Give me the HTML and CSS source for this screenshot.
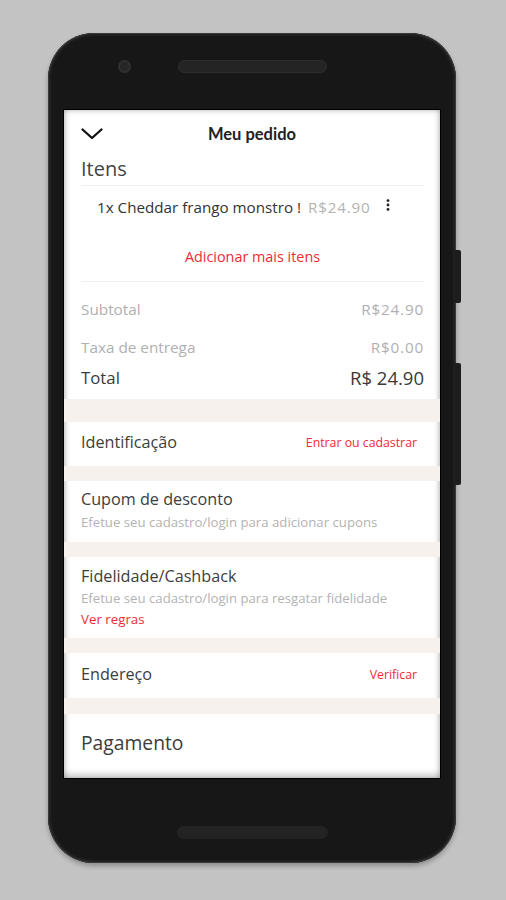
FILE: index.html
```html
<!DOCTYPE html>
<html lang="pt-BR">
<head>
<meta charset="utf-8">
<title>Meu pedido</title>
<link rel="stylesheet" href="styles.css">
</head>
<body>
<div class="phone">
  <div class="btn btn-a"></div>
  <div class="btn btn-b"></div>
  <div class="phone-top">
    <div class="camera"></div>
    <div class="speaker"></div>
  </div>
  <div class="screen">
    <div class="header">
      <svg class="chev" width="22" height="12" viewBox="0 0 22 12"><polyline points="1.5,1.5 11,10 20.5,1.5" fill="none" stroke="#111" stroke-width="2.3" stroke-linecap="round" stroke-linejoin="round"/></svg>
      <div class="title">Meu pedido</div>
    </div>
    <div class="pad">
      <div class="sec-title">Itens</div>
      <div class="item-row">
        <span class="item-name">1x Cheddar frango monstro !</span>
        <span class="item-price price">R$24.90</span>
        <svg class="kebab" width="4" height="12" viewBox="0 0 4 12"><circle cx="2" cy="1.6" r="1.4" fill="#222"/><circle cx="2" cy="6" r="1.4" fill="#222"/><circle cx="2" cy="10.4" r="1.4" fill="#222"/></svg>
      </div>
      <div class="add-row">Adicionar mais itens</div>
      <div class="summary">
        <div class="sum-row muted"><span>Subtotal</span><span class="price">R$24.90</span></div>
        <div class="sum-row muted gap-lg"><span>Taxa de entrega</span><span class="price">R$0.00</span></div>
        <div class="sum-row total"><span>Total</span><span class="total-val">R$ 24.90</span></div>
      </div>
    </div>
    <div class="band b23"></div>
    <div class="row-line h44 up3">
      <span class="label">Identificação</span>
      <span class="link">Entrar ou cadastrar</span>
    </div>
    <div class="band b15"></div>
    <div class="block cupom">
      <div class="label big">Cupom de desconto</div>
      <div class="sub">Efetue seu cadastro/login para adicionar cupons</div>
    </div>
    <div class="band b15"></div>
    <div class="block fid">
      <div class="label big">Fidelidade/Cashback</div>
      <div class="sub">Efetue seu cadastro/login para resgatar fidelidade</div>
      <div class="sub red">Ver regras</div>
    </div>
    <div class="band b15"></div>
    <div class="row-line h45 up2">
      <span class="label big">Endereço</span>
      <span class="link">Verificar</span>
    </div>
    <div class="band b16"></div>
    <div class="row-line h56">
      <span class="label pay">Pagamento</span>
    </div>
  </div>
  <div class="phone-bottom">
    <div class="home-bar"></div>
  </div>
</div>
</body>
</html>
```
FILE: styles.css
```css
* { box-sizing: border-box; }
html, body { margin: 0; padding: 0; }
body {
  background: #c3c3c3;
  width: 506px;
  height: 900px;
  overflow: hidden;
  font-family: "Open Sans", "Noto Sans", sans-serif;
}
.phone {
  position: relative;
  margin: 33px 0 0 48px;
  width: 408px;
  height: 830px;
  background: #171717;
  border-radius: 46px;
  box-shadow: inset 0 0 0 1px #3a3a3a, inset 0 0 0 3px #202020, 0 3px 5px rgba(0,0,0,0.28);
  display: flex;
  flex-direction: column;
}
.btn {
  position: absolute;
  right: -5px;
  width: 6px;
  background: #1d1d1d;
  border-radius: 0 2px 2px 0;
}
.btn-a { top: 217px; height: 53px; }
.btn-b { top: 330px; height: 122px; }
.phone-top {
  height: 77px;
  padding: 27px 0 0 70px;
  display: flex;
  align-items: flex-start;
  flex-shrink: 0;
}
.camera {
  width: 13px;
  height: 13px;
  border-radius: 50%;
  background: #262626;
  box-shadow: inset 0 0 0 2px #303030;
  margin-right: 47px;
}
.speaker {
  width: 149px;
  height: 13px;
  border-radius: 7px;
  background: #242424;
  box-shadow: inset 0 0 0 1px #2c2c2c;
}
.screen {
  margin: 0 16px;
  height: 668px;
  background: #fff;
  outline: 1px solid #000;
  box-shadow: inset 4px 0 5px -2px rgba(0,0,0,0.18), inset -4px 0 5px -2px rgba(0,0,0,0.18), inset 0 -7px 6px -3px rgba(0,0,0,0.2), inset 0 4px 5px -2px rgba(0,0,0,0.12);
  overflow: hidden;
  color: #3d3d3d;
  flex-shrink: 0;
}
.phone-bottom {
  flex: 1;
  padding: 48px 0 0 129px;
}
.home-bar {
  width: 151px;
  height: 13px;
  border-radius: 7px;
  background: #232323;
}
.header {
  height: 46px;
  display: flex;
  align-items: center;
  padding: 3px 17px 0 17px;
}
.chev { display: block; margin-top: -1px; }
.title {
  flex: 1;
  text-align: center;
  font-family: Lato, "Open Sans", sans-serif;
  font-weight: 700;
  font-size: 16.5px;
  color: #222;
  margin-right: 22px;
  margin-top: -2px;
}
.pad { padding: 0 16px 0 17px; }
.sec-title {
  font-size: 20px;
  line-height: 26px;
  color: #444;
  border-bottom: 1px solid #f0f0f0;
  padding-bottom: 3px;
}
.item-row {
  height: 42px;
  display: flex;
  align-items: center;
  padding-left: 16px;
  font-size: 15.2px;
}
.item-name { color: #333; }
.item-price { color: #b3b3b3; margin-left: 7px; }
.price { letter-spacing: 0.8px; }
.kebab { margin-left: 16px; margin-top: -4px; }
.add-row {
  height: 54px;
  display: flex;
  align-items: center;
  justify-content: center;
  color: #ee2b35;
  font-size: 14.4px;
  padding-top: 3px;
  border-bottom: 1px solid #f0f0f0;
}
.summary {
  padding: 13px 0 8px;
  display: flex;
  flex-direction: column;
}
.sum-row {
  height: 28px;
  display: flex;
  justify-content: space-between;
  align-items: center;
  font-size: 15.3px;
}
.muted { color: #b0b0b0; }
.gap-lg { margin-top: 10px; }
.total { margin-top: 2px; font-size: 16.8px; color: #3a3a3a; }
.total-val { font-size: 18.5px; }
.band { background: #f6f1ed; }
.b23 { height: 23px; }
.b15 { height: 15px; }
.b16 { height: 16px; }
.row-line {
  display: flex;
  align-items: center;
  justify-content: space-between;
  padding: 0 23px 0 17px;
}
.up3 { padding-bottom: 4px; }
.up2 { padding-bottom: 3px; }
.h44 { height: 44px; }
.h45 { height: 45px; }
.h56 { height: 56px; }
.label { font-size: 16.2px; color: #3d3d3d; }
.label.big { font-size: 16.2px; }
.label.pay { font-size: 19.3px; }
.link { font-size: 12.3px; color: #ee2b35; }
.block { padding: 0 17px; display: flex; flex-direction: column; }
.block .label { line-height: 20px; }
.sub { font-size: 13.2px; line-height: 18px; color: #b3b3b3; }
.sub.red { color: #ee2b35; font-size: 13.3px; }
.cupom { height: 61px; padding-top: 8px; gap: 4px; }
.fid { height: 81px; padding-top: 9px; gap: 3px; }
```
